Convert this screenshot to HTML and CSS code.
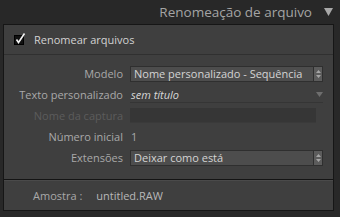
FILE: index.html
```html
<!DOCTYPE html>
<html lang="pt">
<head>
  <meta charset="UTF-8">
  <title>Renomeação de arquivo</title>
  <link rel="stylesheet" href="styles.css">
</head>
<body>
  <!-- Cabeçalho do painel -->
  <div class="panel-head">
    <span class="panel-title">Renomeação de arquivo</span>
    <svg class="panel-toggle" width="9" height="8" viewBox="0 0 9 8">
      <path d="M0 0 H9 L4.5 8 Z" fill="#a8a8a8"></path>
    </svg>
  </div>

  <div class="panel">
    <!-- Caixa de seleção -->
    <div class="check-row">
      <svg class="check" width="12" height="12" viewBox="0 0 12 12">
        <rect x="0.5" y="2.5" width="9" height="9" fill="#111" stroke="#000"></rect>
        <path d="M2.5 6.5 L4.5 9.5 L10.5 0.5" fill="none" stroke="#f2f2f2" stroke-width="1.6"></path>
      </svg>
      <span>Renomear arquivos</span>
    </div>

    <!-- Campos -->
    <div class="form">
      <label class="lbl">Modelo</label>
      <div class="select">
        <span>Nome personalizado - Sequência</span>
        <span class="spin">
          <svg width="5" height="8" viewBox="0 0 5 8">
            <path d="M0 3 L2.5 0 L5 3 Z M0 5 L2.5 8 L5 5 Z" fill="#a5a5a5"></path>
          </svg>
        </span>
      </div>

      <label class="lbl">Texto personalizado</label>
      <div class="text-field">
        <span class="italic">sem título</span>
        <svg class="drop" width="7" height="5" viewBox="0 0 7 5">
          <path d="M0 0 H7 L3.5 5 Z" fill="#6e6e6e"></path>
        </svg>
      </div>

      <label class="lbl dim">Nome da captura</label>
      <div class="dark-field"></div>

      <label class="lbl">Número inicial</label>
      <div class="value">1</div>

      <label class="lbl">Extensões</label>
      <div class="select">
        <span>Deixar como está</span>
        <span class="spin">
          <svg width="5" height="8" viewBox="0 0 5 8">
            <path d="M0 3 L2.5 0 L5 3 Z M0 5 L2.5 8 L5 5 Z" fill="#a5a5a5"></path>
          </svg>
        </span>
      </div>
    </div>

    <!-- Amostra -->
    <div class="sample">
      <span class="sample-lbl">Amostra :</span>
      <span class="sample-val">untitled.RAW</span>
    </div>
  </div>
</body>
</html>
```

FILE: styles.css
```css
body {
  margin: 0;
  width: 340px;
  height: 217px;
  overflow: hidden;
  background-color: #282828;
  font-family: "Open Sans", "Noto Sans", sans-serif;
  font-size: 11px;
  color: #a9a9a9;
}
/* Cabeçalho */
.panel-head {
  height: 24px;
  display: flex;
  align-items: center;
  justify-content: flex-end;
  gap: 12px;
  padding-right: 7px;
  box-sizing: border-box;
}
.panel-title {
  font-size: 13.5px;
  color: #a4a4a4;
}
/* Painel principal */
.panel {
  margin-left: 3px;
  width: 331px;
  height: 187px;
  box-sizing: border-box;
  border: 1px solid #161616;
  background-color: #3f3f3f;
  display: flex;
  flex-direction: column;
}
.check-row {
  height: 29px;
  display: flex;
  align-items: center;
  gap: 8px;
  padding-left: 10px;
  border-bottom: 1px solid #303030;
  color: #d2d2d2;
}
.check {
  margin-top: -2px;
}
/* Grade de campos */
.form {
  display: grid;
  grid-template-columns: 119px 193px;
  grid-auto-rows: 21px;
  column-gap: 7px;
  align-items: center;
  padding-top: 8px;
  height: 125px;
  box-sizing: border-box;
  border-bottom: 1px solid #141414;
}
.lbl {
  text-align: right;
  color: #a9a9a9;
}
.lbl.dim {
  color: #5c5c5c;
}
.select {
  height: 14px;
  display: flex;
  align-items: center;
  justify-content: space-between;
  background-color: #4d4d4d;
  border: 1px solid #2f2f2f;
  color: #d4d4d4;
  padding-left: 3px;
}
.spin {
  width: 8px;
  height: 14px;
  display: flex;
  align-items: center;
  justify-content: center;
  background-color: #5c5c5c;
  border-left: 1px solid #2f2f2f;
}
.text-field {
  height: 16px;
  display: flex;
  align-items: center;
  justify-content: space-between;
  border-bottom: 1px solid #353535;
  color: #d8d8d8;
}
.italic {
  font-style: italic;
  padding-left: 1px;
}
.drop {
  margin-right: 0;
}
.dark-field {
  height: 14px;
  margin-right: 7px;
  background-color: #363636;
  border-bottom: 1px solid #3a3a3a;
}
.value {
  color: #a9a9a9;
  padding-left: 1px;
}
/* Amostra */
.sample {
  flex: 1;
  display: flex;
  align-items: center;
  gap: 14px;
  padding-left: 29px;
  border-top: 1px solid #4a4a4a;
}
.sample-val {
  color: #b8b8b8;
}
```
